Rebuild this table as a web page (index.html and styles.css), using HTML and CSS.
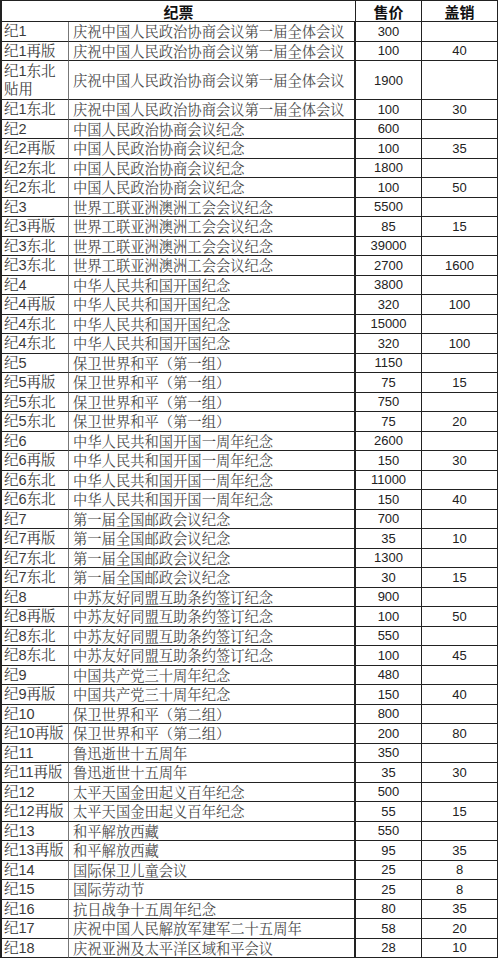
FILE: index.html
```html
<!DOCTYPE html>
<html lang="zh-CN">
<head>
<meta charset="utf-8">
<title>纪票</title>
<link rel="stylesheet" href="styles.css">
</head>
<body>
<div class="sheet">
  <div class="h name">纪票</div><div class="h">售价</div><div class="h">盖销</div>

  <div class="c id">纪1</div><div class="c t">庆祝中国人民政治协商会议第一届全体会议</div><div class="c n">300</div><div class="c n"></div>
  <div class="c id">纪1再版</div><div class="c t">庆祝中国人民政治协商会议第一届全体会议</div><div class="c n">100</div><div class="c n">40</div>
  <div class="c id tall">纪1东北<br>贴用</div><div class="c t tall">庆祝中国人民政治协商会议第一届全体会议</div><div class="c n tall">1900</div><div class="c n tall"></div>
  <div class="c id">纪1东北</div><div class="c t">庆祝中国人民政治协商会议第一届全体会议</div><div class="c n">100</div><div class="c n">30</div>

  <div class="c id">纪2</div><div class="c t">中国人民政治协商会议纪念</div><div class="c n">600</div><div class="c n"></div>
  <div class="c id">纪2再版</div><div class="c t">中国人民政治协商会议纪念</div><div class="c n">100</div><div class="c n">35</div>
  <div class="c id">纪2东北</div><div class="c t">中国人民政治协商会议纪念</div><div class="c n">1800</div><div class="c n"></div>
  <div class="c id">纪2东北</div><div class="c t">中国人民政治协商会议纪念</div><div class="c n">100</div><div class="c n">50</div>

  <div class="c id">纪3</div><div class="c t">世界工联亚洲澳洲工会会议纪念</div><div class="c n">5500</div><div class="c n"></div>
  <div class="c id">纪3再版</div><div class="c t">世界工联亚洲澳洲工会会议纪念</div><div class="c n">85</div><div class="c n">15</div>
  <div class="c id">纪3东北</div><div class="c t">世界工联亚洲澳洲工会会议纪念</div><div class="c n">39000</div><div class="c n"></div>
  <div class="c id">纪3东北</div><div class="c t">世界工联亚洲澳洲工会会议纪念</div><div class="c n">2700</div><div class="c n">1600</div>

  <div class="c id">纪4</div><div class="c t">中华人民共和国开国纪念</div><div class="c n">3800</div><div class="c n"></div>
  <div class="c id">纪4再版</div><div class="c t">中华人民共和国开国纪念</div><div class="c n">320</div><div class="c n">100</div>
  <div class="c id">纪4东北</div><div class="c t">中华人民共和国开国纪念</div><div class="c n">15000</div><div class="c n"></div>
  <div class="c id">纪4东北</div><div class="c t">中华人民共和国开国纪念</div><div class="c n">320</div><div class="c n">100</div>

  <div class="c id">纪5</div><div class="c t">保卫世界和平（第一组）</div><div class="c n">1150</div><div class="c n"></div>
  <div class="c id">纪5再版</div><div class="c t">保卫世界和平（第一组）</div><div class="c n">75</div><div class="c n">15</div>
  <div class="c id">纪5东北</div><div class="c t">保卫世界和平（第一组）</div><div class="c n">750</div><div class="c n"></div>
  <div class="c id">纪5东北</div><div class="c t">保卫世界和平（第一组）</div><div class="c n">75</div><div class="c n">20</div>

  <div class="c id">纪6</div><div class="c t">中华人民共和国开国一周年纪念</div><div class="c n">2600</div><div class="c n"></div>
  <div class="c id">纪6再版</div><div class="c t">中华人民共和国开国一周年纪念</div><div class="c n">150</div><div class="c n">30</div>
  <div class="c id">纪6东北</div><div class="c t">中华人民共和国开国一周年纪念</div><div class="c n">11000</div><div class="c n"></div>
  <div class="c id">纪6东北</div><div class="c t">中华人民共和国开国一周年纪念</div><div class="c n">150</div><div class="c n">40</div>

  <div class="c id">纪7</div><div class="c t">第一届全国邮政会议纪念</div><div class="c n">700</div><div class="c n"></div>
  <div class="c id">纪7再版</div><div class="c t">第一届全国邮政会议纪念</div><div class="c n">35</div><div class="c n">10</div>
  <div class="c id">纪7东北</div><div class="c t">第一届全国邮政会议纪念</div><div class="c n">1300</div><div class="c n"></div>
  <div class="c id">纪7东北</div><div class="c t">第一届全国邮政会议纪念</div><div class="c n">30</div><div class="c n">15</div>

  <div class="c id">纪8</div><div class="c t">中苏友好同盟互助条约签订纪念</div><div class="c n">900</div><div class="c n"></div>
  <div class="c id">纪8再版</div><div class="c t">中苏友好同盟互助条约签订纪念</div><div class="c n">100</div><div class="c n">50</div>
  <div class="c id">纪8东北</div><div class="c t">中苏友好同盟互助条约签订纪念</div><div class="c n">550</div><div class="c n"></div>
  <div class="c id">纪8东北</div><div class="c t">中苏友好同盟互助条约签订纪念</div><div class="c n">100</div><div class="c n">45</div>

  <div class="c id">纪9</div><div class="c t">中国共产党三十周年纪念</div><div class="c n">480</div><div class="c n"></div>
  <div class="c id">纪9再版</div><div class="c t">中国共产党三十周年纪念</div><div class="c n">150</div><div class="c n">40</div>
  <div class="c id">纪10</div><div class="c t">保卫世界和平（第二组）</div><div class="c n">800</div><div class="c n"></div>
  <div class="c id">纪10再版</div><div class="c t">保卫世界和平（第二组）</div><div class="c n">200</div><div class="c n">80</div>
  <div class="c id">纪11</div><div class="c t">鲁迅逝世十五周年</div><div class="c n">350</div><div class="c n"></div>
  <div class="c id">纪11再版</div><div class="c t">鲁迅逝世十五周年</div><div class="c n">35</div><div class="c n">30</div>
  <div class="c id">纪12</div><div class="c t">太平天国金田起义百年纪念</div><div class="c n">500</div><div class="c n"></div>
  <div class="c id">纪12再版</div><div class="c t">太平天国金田起义百年纪念</div><div class="c n">55</div><div class="c n">15</div>
  <div class="c id">纪13</div><div class="c t">和平解放西藏</div><div class="c n">550</div><div class="c n"></div>
  <div class="c id">纪13再版</div><div class="c t">和平解放西藏</div><div class="c n">95</div><div class="c n">35</div>
  <div class="c id">纪14</div><div class="c t">国际保卫儿童会议</div><div class="c n">25</div><div class="c n">8</div>
  <div class="c id">纪15</div><div class="c t">国际劳动节</div><div class="c n">25</div><div class="c n">8</div>
  <div class="c id">纪16</div><div class="c t">抗日战争十五周年纪念</div><div class="c n">80</div><div class="c n">35</div>
  <div class="c id">纪17</div><div class="c t">庆祝中国人民解放军建军二十五周年</div><div class="c n">58</div><div class="c n">20</div>
  <div class="c id">纪18</div><div class="c t">庆祝亚洲及太平洋区域和平会议</div><div class="c n">28</div><div class="c n">10</div>
</div>
</body>
</html>
```

FILE: styles.css
```css
html, body {
  margin: 0;
  padding: 0;
  background: #ffffff;
}

.sheet {
  display: grid;
  grid-template-columns: 67px 287px 66px 76px;
  grid-template-rows: 21px;
  grid-auto-rows: 19.5px;
  width: 498px;
  border-top: 1px solid #222;
  border-left: 2px solid #222;
  box-sizing: border-box;
}

.h, .c {
  border-right: 1px solid #222;
  border-bottom: 1px solid #222;
  box-sizing: border-box;
  overflow: hidden;
  white-space: nowrap;
  display: flex;
  align-items: center;
}

.h {
  justify-content: center;
  font-family: "Liberation Sans", "Noto Sans CJK SC", sans-serif;
  font-weight: bold;
  font-size: 15px;
  color: #111;
}

.h.name {
  grid-column: span 2;
}

.c.id {
  font-family: "Liberation Sans", "Noto Serif CJK SC", "Noto Sans CJK SC", sans-serif;
  font-size: 14.5px;
  color: #3a3a3a;
  padding-left: 2px;
  line-height: 18px;
  border-right-color: #777;
}

.c.t {
  font-family: "Liberation Serif", "Noto Serif CJK SC", "Noto Sans CJK SC", serif;
  font-size: 14.3px;
  color: #4a4a4a;
  padding-left: 4px;
  border-right-width: 2px;
}

.c.n {
  justify-content: center;
  font-family: "Liberation Sans", Arial, sans-serif;
  font-size: 13px;
  color: #222;
}

.c.n:last-child,
.h:nth-child(3) {
  border-right-width: 1px;
}

.tall {
  grid-row: span 2;
}

.c.id.tall {
  white-space: normal;
}
```
